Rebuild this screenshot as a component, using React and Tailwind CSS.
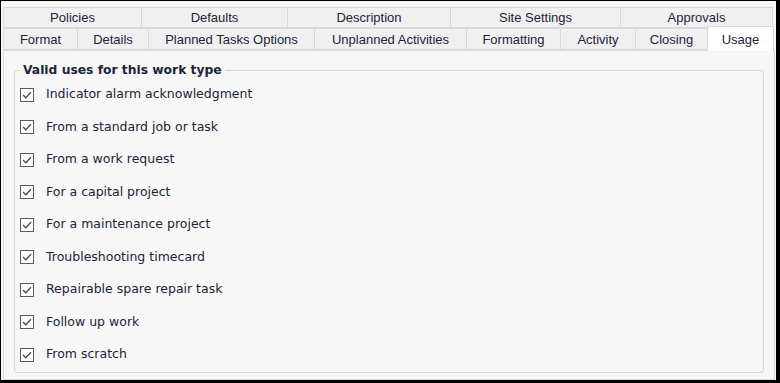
const topTabs = [
  { label: 'Policies', w: 'w-[138px]' },
  { label: 'Defaults', w: 'w-[146px]' },
  { label: 'Description', w: 'w-[163px]' },
  { label: 'Site Settings', w: 'w-[170px]' },
  { label: 'Approvals', w: 'w-[153px]' },
]

const bottomTabs = [
  { label: 'Format', w: 'w-[74px]' },
  { label: 'Details', w: 'w-[71px]' },
  { label: 'Planned Tasks Options', w: 'w-[166px]' },
  { label: 'Unplanned Activities', w: 'w-[152px]' },
  { label: 'Formatting', w: 'w-[94px]' },
  { label: 'Activity', w: 'w-[75px]' },
  { label: 'Closing', w: 'w-[72px]' },
]

const uses = [
  'Indicator alarm acknowledgment',
  'From a standard job or task',
  'From a work request',
  'For a capital project',
  'For a maintenance project',
  'Troubleshooting timecard',
  'Repairable spare repair task',
  'Follow up work',
  'From scratch',
]

export default function App() {
  return (
    <div className="h-[383px] w-[780px] bg-black pb-[3px] pl-px pr-[4px] pt-px font-['Liberation_Sans',sans-serif] text-[13px] text-[#1b2438]">
      <div className="flex h-full flex-col bg-[#f7f7f7] pl-[2px] pt-[5px]">
        <div className="flex h-[22px] pt-px">
          {topTabs.map((t) => (
            <Tab key={t.label} className={t.w}>
              {t.label}
            </Tab>
          ))}
        </div>
        <div className="flex h-[22px]">
          {bottomTabs.map((t) => (
            <Tab key={t.label} className={t.w}>
              <span className="pt-[2px]">{t.label}</span>
            </Tab>
          ))}
          <div className="relative z-10 -mt-[2px] flex h-[25px] w-[67px] items-start justify-center border border-b-0 border-[#d9d9d9] bg-white pt-[3px]">
            Usage
          </div>
        </div>

        <div className="mr-[1px] flex-1 border border-[#d9d9d9] bg-[#f7f7f7] px-[10px] pb-[6px] pt-[10px] font-['DejaVu_Sans',sans-serif] text-[12.5px]">
          <fieldset className="h-full rounded-[3px] border border-[#d3d9e0] px-[5px] pt-0">
            <legend className="px-[3px] text-[12.3px] font-bold">
              Valid uses for this work type
            </legend>
            <div className="-mt-[1px] flex flex-col">
              {uses.map((u) => (
                <label key={u} className="flex h-[32.5px] items-center gap-[12px]">
                  <CheckBox />
                  <span>{u}</span>
                </label>
              ))}
            </div>
          </fieldset>
        </div>
      </div>
    </div>
  )
}

function Tab({ className, children }) {
  return (
    <div
      className={`${className} flex shrink-0 items-center justify-center border border-r-0 border-[#d9d9d9] bg-[#f0f0f0] first:border-l last:border-r`}
    >
      {children}
    </div>
  )
}

function CheckBox() {
  return (
    <span className="flex h-[14px] w-[14px] items-center justify-center border border-[#5a5a5a] bg-white">
      <svg width="10" height="8" viewBox="0 0 10 8" fill="none" stroke="#4a4a4a" strokeWidth="1.3">
        <path d="M1 4 L3.8 6.8 L9 1.2" />
      </svg>
    </span>
  )
}
